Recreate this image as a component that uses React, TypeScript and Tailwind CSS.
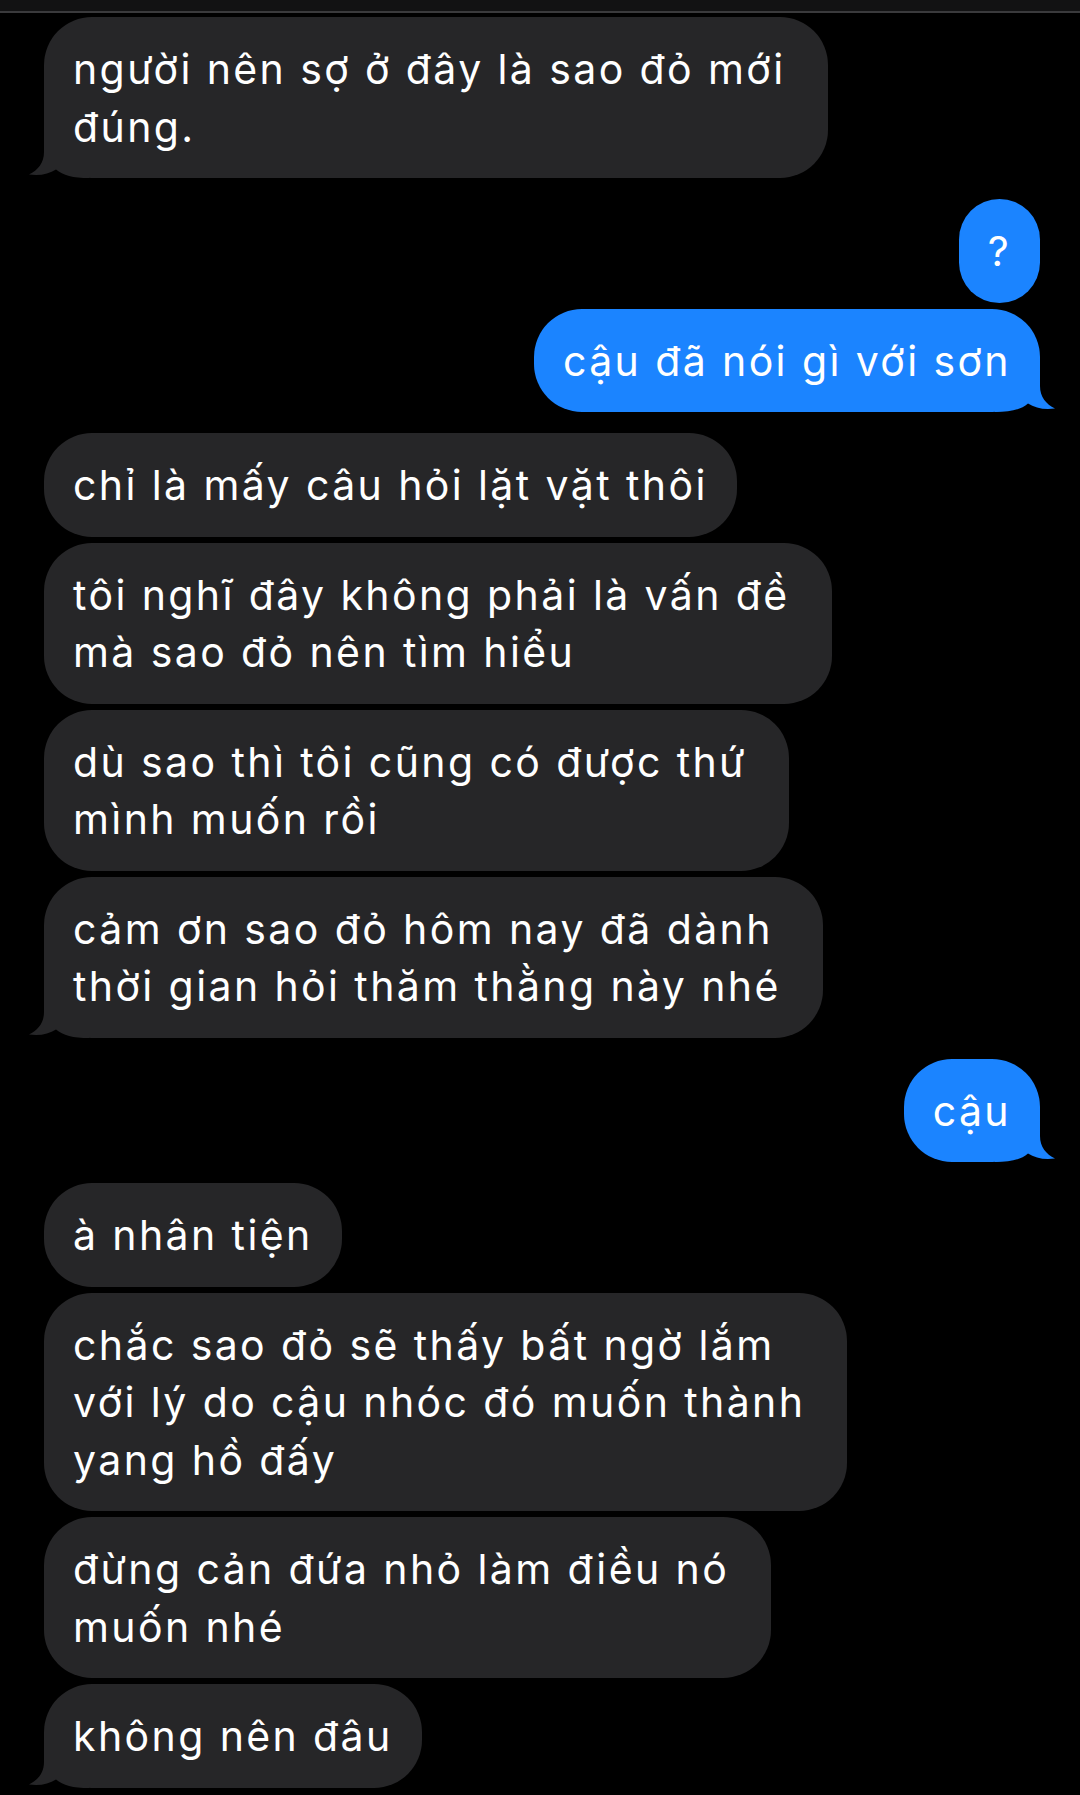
import React from "react";

type Side = "them" | "me";

type Group = {
  side: Side;
  bubbles: string[][];
};

const groups: Group[] = [
  { side: "them", bubbles: [["người nên sợ ở đây là sao đỏ mới", "đúng."]] },
  { side: "me", bubbles: [["?"], ["cậu đã nói gì với sơn"]] },
  {
    side: "them",
    bubbles: [
      ["chỉ là mấy câu hỏi lặt vặt thôi"],
      ["tôi nghĩ đây không phải là vấn đề", "mà sao đỏ nên tìm hiểu"],
      ["dù sao thì tôi cũng có được thứ", "mình muốn rồi"],
      ["cảm ơn sao đỏ hôm nay đã dành", "thời gian hỏi thăm thằng này nhé"],
    ],
  },
  { side: "me", bubbles: [["cậu"]] },
  {
    side: "them",
    bubbles: [
      ["à nhân tiện"],
      [
        "chắc sao đỏ sẽ thấy bất ngờ lắm",
        "với lý do cậu nhóc đó muốn thành",
        "yang hồ đấy",
      ],
      ["đừng cản đứa nhỏ làm điều nó", "muốn nhé"],
      ["không nên đâu"],
    ],
  },
];

const tailPath =
  "M15 0 L15 24 C15 35 9 42 0 46.5 C11 48 20 46 27 41.5 C34 47.5 44 50 60 50 L60 0 Z";

const Tail = ({ side }: { side: Side }) => {
  if (side === "them") {
    return (
      <svg
        className="absolute -left-[15px] bottom-0"
        width="60"
        height="50"
        viewBox="0 0 60 50"
      >
        <path d={tailPath} fill="#262628" />
      </svg>
    );
  }
  return (
    <svg
      className="absolute -right-[15px] bottom-0 -scale-x-100"
      width="60"
      height="50"
      viewBox="0 0 60 50"
    >
      <path d={tailPath} fill="#1b84ff" />
    </svg>
  );
};

const Bubble = ({
  side,
  lines,
  tail,
}: {
  side: Side;
  lines: string[];
  tail: boolean;
}) => (
  <div
    className={`relative rounded-[48px] pl-[29px] pt-[24px] pb-[22px] text-[41px] leading-[57.5px] tracking-[2.4px] text-white whitespace-nowrap ${
      lines.length > 1 ? "pr-[42px]" : "pr-[29px]"
    } ${side === "me" ? "self-end bg-[#1b84ff]" : "self-start bg-[#262628]"}`}
  >
    {tail && <Tail side={side} />}
    <div className="relative">
      {lines.map((line, i) => (
        <div key={i}>{line}</div>
      ))}
    </div>
  </div>
);

export default function App() {
  return (
    <div
      className="min-h-screen w-full bg-black"
      style={{ fontFamily: "Inter, 'Noto Sans', sans-serif" }}
    >
      <div className="h-[11px] bg-[#121213]" />
      <div className="h-[2px] bg-[#3a3a3c]" />
      <div className="flex flex-col gap-[21px] pl-[44px] pr-[40px] pt-[4px]">
        {groups.map((g, gi) => (
          <div key={gi} className="flex flex-col gap-[6px]">
            {g.bubbles.map((lines, bi) => (
              <Bubble
                key={bi}
                side={g.side}
                lines={lines}
                tail={bi === g.bubbles.length - 1}
              />
            ))}
          </div>
        ))}
      </div>
    </div>
  );
}
